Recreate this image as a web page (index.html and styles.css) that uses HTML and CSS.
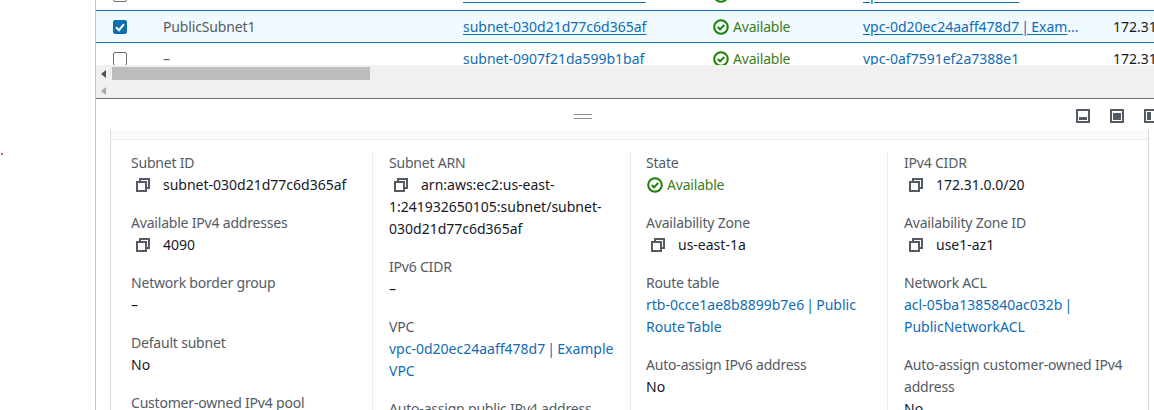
FILE: index.html
```html
<!DOCTYPE html>
<html lang="en">
<head>
    <meta charset="UTF-8">
    <title>Subnets</title>
    <link rel="stylesheet" href="styles.css">
</head>
<body>
    <svg width="0" height="0" class="defs">
        <symbol id="copy" viewBox="0 0 14 14">
            <path d="M4 3.5V1h9v9h-2.5" fill="none" stroke="currentColor" stroke-width="2"/>
            <rect x="1" y="4" width="9" height="9" fill="none" stroke="currentColor" stroke-width="2"/>
        </symbol>
        <symbol id="ok" viewBox="0 0 16 16">
            <circle cx="8" cy="8" r="6.8" fill="none" stroke="currentColor" stroke-width="2"/>
            <path d="M4.8 8l2.3 2.4 4.1-4.6" fill="none" stroke="currentColor" stroke-width="2"/>
        </symbol>
    </svg>

    <span class="red-dot"></span>

    <div class="main">
        <div class="table-wrap">
            <div class="table">
                <div class="row">
                    <span class="check"></span>
                    <span class="name">–</span>
                    <a class="cell-subnet link under">subnet-0c41e7ab93d2f0865</a>
                    <span class="cell-state status"><svg class="icon-ok"><use href="#ok"/></svg>Available</span>
                    <a class="cell-vpc link under">vpc-0af7591ef2a7388e1</a>
                    <span class="cell-cidr">172.31.16.0/20</span>
                </div>
                <div class="row selected">
                    <span class="check checked">
                        <svg viewBox="0 0 14 14" width="14" height="14"><path d="M3 7.2l3 3 5-6" fill="none" stroke="#fff" stroke-width="2"/></svg>
                    </span>
                    <span class="name">PublicSubnet1</span>
                    <a class="cell-subnet link under">subnet-030d21d77c6d365af</a>
                    <span class="cell-state status"><svg class="icon-ok"><use href="#ok"/></svg>Available</span>
                    <span class="cell-vpc"><a class="link under">vpc-0d20ec24aaff478d7 | Exam</a><span class="link">...</span></span>
                    <span class="cell-cidr">172.31.0.0/20</span>
                </div>
                <div class="row">
                    <span class="check"></span>
                    <span class="name">–</span>
                    <a class="cell-subnet link">subnet-0907f21da599b1baf</a>
                    <span class="cell-state status"><svg class="icon-ok"><use href="#ok"/></svg>Available</span>
                    <a class="cell-vpc link">vpc-0af7591ef2a7388e1</a>
                    <span class="cell-cidr">172.31.32.0/20</span>
                </div>
            </div>
        </div>

        <div class="scrollbars">
            <div class="scroll-line">
                <span class="arrow"></span>
                <span class="thumb"></span>
            </div>
            <div class="scroll-line">
                <span class="arrow faded"></span>
            </div>
        </div>

        <div class="split-head">
            <span class="handle"></span>
            <div class="split-icons">
                <svg class="pos-icon" viewBox="0 0 14 14"><rect x="1" y="1" width="12" height="12" fill="none" stroke="#545b64" stroke-width="2"/><rect x="3" y="8" width="8" height="3" fill="#545b64"/></svg>
                <svg class="pos-icon" viewBox="0 0 14 14"><rect x="1" y="1" width="12" height="12" fill="none" stroke="#545b64" stroke-width="2"/><rect x="3" y="4" width="8" height="7" fill="#545b64"/></svg>
                <svg class="pos-icon" viewBox="0 0 14 14"><rect x="1" y="1" width="12" height="12" fill="none" stroke="#545b64" stroke-width="2"/><rect x="3" y="3" width="4" height="8" fill="#545b64"/></svg>
            </div>
        </div>

        <div class="details">
            <div class="details-band"></div>
            <div class="columns">
                <div class="col">
                    <div class="field">
                        <div class="label">Subnet ID</div>
                        <div class="value"><svg class="icon-copy"><use href="#copy"/></svg>subnet-030d21d77c6d365af</div>
                    </div>
                    <div class="field">
                        <div class="label">Available IPv4 addresses</div>
                        <div class="value"><svg class="icon-copy"><use href="#copy"/></svg>4090</div>
                    </div>
                    <div class="field">
                        <div class="label">Network border group</div>
                        <div class="value">–</div>
                    </div>
                    <div class="field">
                        <div class="label">Default subnet</div>
                        <div class="value">No</div>
                    </div>
                    <div class="field">
                        <div class="label">Customer-owned IPv4 pool</div>
                        <div class="value">–</div>
                    </div>
                </div>
                <div class="col">
                    <div class="field">
                        <div class="label">Subnet ARN</div>
                        <div class="value"><svg class="icon-copy"><use href="#copy"/></svg>arn:aws:ec2:us-east-1:241932650105:subnet/subnet-030d21d77c6d365af</div>
                    </div>
                    <div class="field">
                        <div class="label">IPv6 CIDR</div>
                        <div class="value">–</div>
                    </div>
                    <div class="field">
                        <div class="label">VPC</div>
                        <div class="value"><a class="link">vpc-0d20ec24aaff478d7 | Example VPC</a></div>
                    </div>
                    <div class="field">
                        <div class="label">Auto-assign public IPv4 address</div>
                        <div class="value">No</div>
                    </div>
                </div>
                <div class="col col-narrow">
                    <div class="field">
                        <div class="label">State</div>
                        <div class="value status"><svg class="icon-ok"><use href="#ok"/></svg>Available</div>
                    </div>
                    <div class="field">
                        <div class="label">Availability Zone</div>
                        <div class="value"><svg class="icon-copy"><use href="#copy"/></svg>us-east-1a</div>
                    </div>
                    <div class="field">
                        <div class="label">Route table</div>
                        <div class="value"><a class="link">rtb-0cce1ae8b8899b7e6 | Public Route Table</a></div>
                    </div>
                    <div class="field">
                        <div class="label">Auto-assign IPv6 address</div>
                        <div class="value">No</div>
                    </div>
                </div>
                <div class="col">
                    <div class="field">
                        <div class="label">IPv4 CIDR</div>
                        <div class="value"><svg class="icon-copy"><use href="#copy"/></svg>172.31.0.0/20</div>
                    </div>
                    <div class="field">
                        <div class="label">Availability Zone ID</div>
                        <div class="value"><svg class="icon-copy"><use href="#copy"/></svg>use1-az1</div>
                    </div>
                    <div class="field">
                        <div class="label">Network ACL</div>
                        <div class="value"><a class="link">acl-05ba1385840ac032b | PublicNetworkACL</a></div>
                    </div>
                    <div class="field">
                        <div class="label">Auto-assign customer-owned IPv4 address</div>
                        <div class="value">No</div>
                    </div>
                </div>
            </div>
        </div>
    </div>
</body>
</html>
```

FILE: styles.css
```css
html, body {
    margin: 0;
    height: 410px;
    overflow: hidden;
}
body {
    font-family: "Noto Sans", "Open Sans", sans-serif;
    font-size: 14px;
    line-height: 22px;
    color: #16191f;
    background: #fff;
    padding-left: 95px;
}
.defs {
    position: absolute;
}
.red-dot {
    position: absolute;
    left: 1px;
    top: 153px;
    width: 2px;
    height: 2px;
    background: #d9534f;
}
.main {
    border-left: 1px solid #c8c8c8;
    height: 410px;
}

/* table */
.table-wrap {
    height: 65px;
    overflow: hidden;
}
.table {
    margin-top: -21px;
}
.row {
    display: grid;
    grid-template-columns: 67px 300px 250px 150px 250px 1fr;
    height: 31px;
    border-bottom: 1px solid #eaeded;
    align-items: center;
    white-space: nowrap;
    color: #545b64;
}
.row.selected {
    background: #f1faff;
    border-top: 1px solid #0f6eb0;
    border-bottom: 1px solid #0f6eb0;
    margin-top: -1px;
}
.check {
    width: 12px;
    height: 12px;
    margin-left: 17px;
    border: 1.5px solid #6b7078;
    border-radius: 2px;
    background: #fff;
    display: flex;
}
.check.checked {
    background: #0f6eb0;
    border-color: #0f6eb0;
}
.check.checked svg {
    margin: -1px;
}
.name {
    color: #545b64;
    letter-spacing: -0.15px;
}
.link {
    color: #0f6cb4;
    word-spacing: -1.5px;
}
.under {
    text-decoration: underline;
    text-underline-offset: 2px;
}
.cell-cidr {
    color: #16191f;
    overflow: hidden;
}
.status {
    color: #3f7d20;
    display: flex;
    align-items: center;
    letter-spacing: -0.2px;
}
.icon-ok {
    width: 16px;
    height: 16px;
    margin-right: 4px;
    color: #1d8102;
    flex: none;
}

/* scrollbars */
.scrollbars {
    height: 34px;
    background: #f0f0f0;
    border-bottom: 1px solid #6f6f6f;
    box-sizing: border-box;
    padding-top: 1px;
}
.scroll-line {
    display: flex;
    align-items: center;
    height: 15px;
}
.scroll-line + .scroll-line {
    margin-top: 2px;
}
.arrow {
    width: 0;
    height: 0;
    margin-left: 5px;
    border: 4px solid transparent;
    border-left: 0;
    border-right: 5px solid #505050;
}
.arrow.faded {
    border-right-color: #a8a8a8;
}
.thumb {
    width: 258px;
    height: 13px;
    margin-left: 6px;
    background: #bdbdbd;
}

/* split panel */
.split-head {
    height: 31px;
    position: relative;
    background: #fff;
}
.handle {
    position: absolute;
    left: 478px;
    top: 15px;
    width: 18px;
    height: 2px;
    border-top: 1px solid #8d9299;
    border-bottom: 1px solid #8d9299;
    padding-bottom: 1px;
}
.split-icons {
    position: absolute;
    left: 980px;
    top: 10px;
    display: flex;
    gap: 20px;
}
.pos-icon {
    width: 14px;
    height: 14px;
    flex: none;
}

/* details */
.details {
    margin-left: 14px;
    margin-right: 5px;
    border-left: 1px solid #d5dbdb;
    border-right: 1px solid #d5dbdb;
}
.details-band {
    height: 9px;
    background: #fafafa;
    border-bottom: 1px solid #eaeded;
}
.columns {
    display: grid;
    grid-template-columns: 261px 258px 257px 1fr;
    padding-top: 12px;
}
.col {
    padding-left: 16px;
    padding-right: 12px;
    border-left: 1px solid #eaeded;
    min-height: 300px;
}
.col:first-child {
    border-left: none;
    padding-left: 20px;
    padding-right: 24px;
}
.col-narrow {
    padding-left: 15px;
}
.col-narrow .status {
    padding-left: 1px;
}
.field {
    margin-bottom: 16px;
}
.label {
    color: #545b64;
    letter-spacing: -0.2px;
}
.icon-copy {
    width: 14px;
    height: 14px;
    margin: 0 13px 0 5px;
    vertical-align: -2px;
    color: #545b64;
}
```
